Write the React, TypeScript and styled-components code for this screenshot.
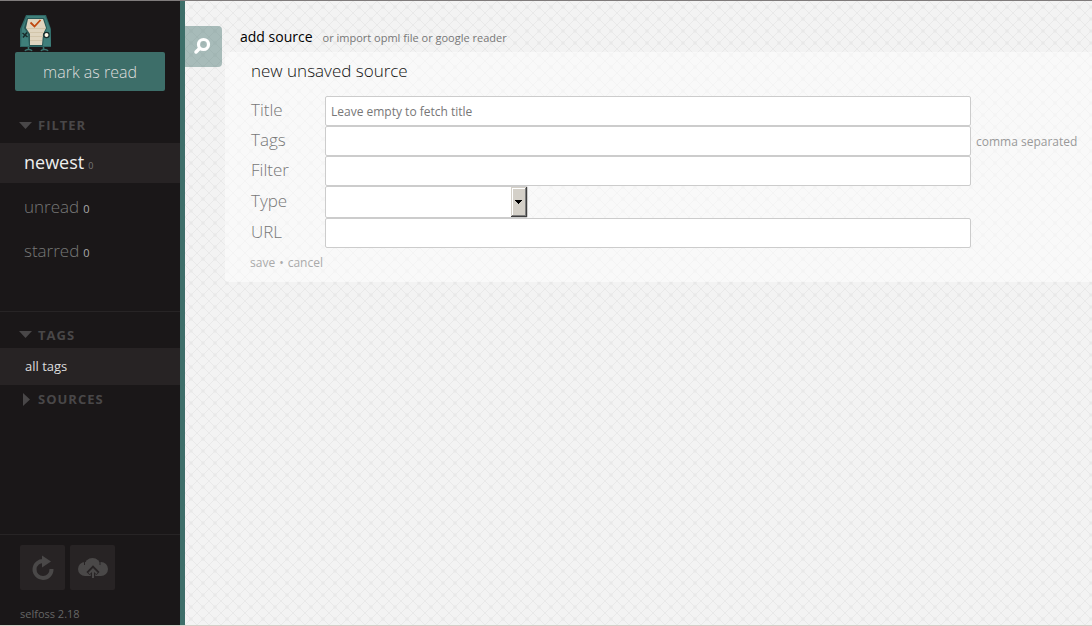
import React from 'react';
import styled, { createGlobalStyle } from 'styled-components';

const diagonals = Array.from({ length: 12 }, (_, i) => `M${i} ${i}h1v1h-1zM${11 - i} ${i}h1v1h-1z`).join('');

const tile =
  `<svg xmlns='http://www.w3.org/2000/svg' width='12' height='12' shape-rendering='crispEdges'><path d='${diagonals}' fill='#e9e9e9'/><path d='M5 4h2v1h-2zM5 7h2v1h-2zM4 5h4v2h-4z' fill='#ededed'/><path d='M5 5h2v2h-2z' fill='#e8e8e8'/></svg>`;

const GlobalStyle = createGlobalStyle`
  * { box-sizing: border-box; }
  body { margin: 0; font-family: 'Open Sans', sans-serif; color: #333; }
  button, input, select { font-family: inherit; }
  button { border: 0; padding: 0; background: none; cursor: pointer; }
`;

const Page = styled.div`
  display: flex;
  min-height: 100vh;
  border-top: 1px solid #807c7c;
  border-bottom: 1px solid #d4d0c8;
`;

const Sidebar = styled.aside`
  display: flex;
  flex-direction: column;
  flex: none;
  width: 185px;
  background: #1a1718;
  border-right: 5px solid #3d6e69;
`;

const Logo = styled.svg`
  display: block;
  width: 32px;
  height: 38px;
  margin: 13px 0 0 20px;
`;

const MarkRead = styled.button`
  height: 39px;
  margin: 0 15px 20px;
  border-radius: 2px;
  background: #3d6e69;
  color: #ddd;
  font-size: 16px;
  font-weight: 300;
`;

const Heading = styled.button<{ $tall?: boolean }>`
  display: flex;
  align-items: center;
  gap: 6px;
  height: ${(p) => (p.$tall ? 28 : 27)}px;
  padding-left: 19px;
  color: #494748;
  font-size: 13px;
  font-weight: 700;
  letter-spacing: 1px;
  text-transform: uppercase;
`;

const Arrow = styled.svg`
  width: 13px;
  height: 13px;
  fill: #494748;
`;

const List = styled.ul`
  margin: 0;
  padding: 0;
  list-style: none;
`;

const FilterList = styled(List)`
  display: grid;
  gap: 4px;
  padding: 4px 0 40px;
  border-bottom: 1px solid #272425;
`;

const FilterItem = styled.button<{ $active?: boolean }>`
  display: flex;
  align-items: baseline;
  gap: 4px;
  width: 100%;
  height: 40px;
  padding: 0 24px;
  line-height: ${(p) => (p.$active ? 38 : 40)}px;
  background: ${(p) => (p.$active ? '#272324' : 'transparent')};
  color: ${(p) => (p.$active ? '#eee' : '#777')};
  font-size: ${(p) => (p.$active ? 18 : 17)}px;
  font-weight: ${(p) => (p.$active ? 400 : 300)};
`;

const Count = styled.span<{ $dim?: boolean }>`
  color: ${(p) => (p.$dim ? '#777' : '#aaa')};
  font-size: ${(p) => (p.$dim ? 9 : 11)}px;
  font-weight: 400;
`;

const TagItem = styled.button`
  display: block;
  width: 100%;
  height: 37px;
  padding: 0 25px 2px;
  background: #272324;
  color: #ddd;
  font-size: 13px;
  text-align: left;
`;

const TagSection = styled.section`
  display: flex;
  flex-direction: column;
  padding-top: 9px;
`;

const Footer = styled.footer`
  margin-top: auto;
  padding: 10px 20px 3px;
  border-top: 1px solid #272425;
`;

const Tools = styled.div`
  display: flex;
  gap: 5px;
  margin-bottom: 16px;
`;

const Tool = styled.button`
  width: 45px;
  height: 45px;
  border-radius: 2px;
  background: #272324;
  svg { display: block; }
`;

const Version = styled.p`
  margin: 0;
  color: #666;
  font-size: 11px;
  line-height: 16px;
`;

const Main = styled.main`
  display: flex;
  flex: 1;
  gap: 3px;
  min-width: 0;
  padding-top: 25px;
  background: #f3f3f3 url("data:image/svg+xml,${encodeURIComponent(tile)}");
`;

const Search = styled.button`
  flex: none;
  width: 37px;
  height: 41px;
  border-radius: 0 4px 4px 0;
  background: rgba(61, 110, 105, 0.42);
  svg { display: block; }
`;

const Content = styled.div`
  flex: 1;
  min-width: 0;
`;

const Actions = styled.div`
  display: flex;
  align-items: baseline;
  gap: 10px;
  height: 26px;
  padding-left: 15px;
  line-height: 22px;
`;

const ActionLink = styled.a<{ $main?: boolean }>`
  color: ${(p) => (p.$main ? '#000' : '#777')};
  font-size: ${(p) => (p.$main ? 14 : 11)}px;
  text-decoration: none;
`;

const Card = styled.form`
  padding: 8px 0 9px 26px;
  border-radius: 4px 0 0 4px;
  background: rgba(255, 255, 255, 0.5);
`;

const Title = styled.h2`
  margin: 0 0 14px;
  font-size: 17px;
  font-weight: 300;
  line-height: 22px;
  color: #111;
`;

const Row = styled.div<{ $tall?: boolean }>`
  display: flex;
  height: ${(p) => (p.$tall ? 32 : 30)}px;
  line-height: ${(p) => (p.$tall ? 30 : 28)}px;
`;

const Label = styled.label`
  flex: none;
  width: 74px;
  color: #777;
  font-size: 17px;
  font-weight: 300;
`;

const FieldArea = styled.div`
  display: grid;
  grid-template-columns: 1fr 121px;
  flex: 1;
  min-width: 0;
`;

const Field = styled.input`
  min-width: 0;
  padding: 0 5px;
  border: 1px solid #ccc;
  border-radius: 2px;
  background: #fff;
  color: #333;
  font-size: 12px;
  outline: 0;
  &::placeholder { color: #777; opacity: 1; }
`;

const Hint = styled.span`
  padding: 2px 0 0 5px;
  color: #999;
  font-size: 12px;
  line-height: 28px;
  white-space: nowrap;
`;

const SelectWrap = styled.div`
  position: relative;
  width: 203px;
`;

const Select = styled.select`
  appearance: none;
  display: block;
  width: 100%;
  height: 100%;
  padding: 0 20px 0 5px;
  border: 1px solid #ccc;
  border-radius: 2px;
  background: #fff;
  outline: 0;
`;

const SelectArrow = styled.svg`
  position: absolute;
  top: 1px;
  right: 1px;
  pointer-events: none;
`;

const Submit = styled.div`
  display: flex;
  gap: 4px;
  margin-left: -1px;
  padding-top: 5px;
  color: #aaa;
  font-size: 12px;
  line-height: 20px;
`;

const TextButton = styled.button`
  color: inherit;
  font-size: inherit;
  line-height: inherit;
`;

const Down = () => <Arrow viewBox="0 0 13 13"><path d="M0 3h13l-6.5 7z" /></Arrow>;
const Right = () => <Arrow viewBox="0 0 13 13"><path d="M4 0v13l7-6.5z" /></Arrow>;

function Mascot() {
  return (
    <Logo viewBox="0 0 32 38" role="img" aria-label="selfoss">
      <path d="M6 1h20l5 14v18H0V15z" fill="#2f6664" />
      <path d="M7 2h18l5 12 1 18H1l1-18z" fill="#3f7f7a" />
      <path d="M7 4h17l3 10-3 6-1 12H9L8 20l-4-6z" fill="#2a5856" />
      <path d="M8 5h15l3 9-3 6-1 11H10V20l-4-6z" fill="#e0d5bf" />
      <path d="M7 14.500h18M9 18.500h15M10 22.500h13M10 26.500h12" stroke="#d2c5aa" fill="none" />
      <path d="M10.500 8.500l4 4 6-6.500" fill="none" stroke="#c0480f" strokeWidth="1.800" />
      <path d="M2.500 19l5 4M3 23.500l4-5" stroke="#182b2b" strokeWidth="1.600" />
      <circle cx="26.500" cy="21" r="2.600" fill="#fff8e6" stroke="#182b2b" strokeWidth="1.200" />
      <path d="M8.500 33v2.500M23.500 33v2.500M5 37c1-2 6-2 7 0M21 37c1-2 6-2 7 0" stroke="#3b7470" strokeWidth="1.600" fill="none" />
    </Logo>
  );
}

const rows = [
  { id: 'title', label: 'Title', placeholder: 'Leave empty to fetch title' },
  { id: 'tags', label: 'Tags', hint: 'comma separated' },
  { id: 'filter', label: 'Filter' },
];

type FieldRowProps = { id: string; label: string; placeholder?: string; hint?: string };

function FieldRow({ id, label, placeholder, hint }: FieldRowProps) {
  return (
    <Row>
      <Label htmlFor={id}>{label}</Label>
      <FieldArea>
        <Field id={id} type="text" placeholder={placeholder} />
        {hint && <Hint>{hint}</Hint>}
      </FieldArea>
    </Row>
  );
}

export default function App() {
  return (
    <>
      <GlobalStyle />
      <Page>
        <Sidebar>
          <Mascot />
          <MarkRead type="button">mark as read</MarkRead>
          <Heading type="button" $tall><Down />Filter</Heading>
          <FilterList>
            <li><FilterItem type="button" $active>newest <Count $dim>0</Count></FilterItem></li>
            <li><FilterItem type="button">unread <Count>0</Count></FilterItem></li>
            <li><FilterItem type="button">starred <Count>0</Count></FilterItem></li>
          </FilterList>
          <TagSection>
            <Heading type="button"><Down />Tags</Heading>
            <List><li><TagItem type="button">all tags</TagItem></li></List>
            <Heading type="button" $tall><Right />Sources</Heading>
          </TagSection>
          <Footer>
            <Tools>
              <Tool type="button" aria-label="refresh">
                <svg width="45" height="45" viewBox="0 0 45 45">
                  <path d="M24 16A8.500 8.500 0 1 0 31.500 24" fill="none" stroke="#4a4848" strokeWidth="4" />
                  <path d="M22 10.500l9 6-9 6z" fill="#4a4848" />
                </svg>
              </Tool>
              <Tool type="button" aria-label="upload">
                <svg width="45" height="45" viewBox="0 0 45 45">
                  <g fill="#4a4848">
                    <circle cx="15" cy="24" r="7" />
                    <circle cx="31" cy="24" r="7" />
                    <circle cx="22.500" cy="21" r="8" />
                    <path d="M15 22h16v9H15z" />
                  </g>
                  <path d="M14.500 16v4M30 16v4" stroke="#272324" />
                  <path d="M23 34V24M18 28.500l5-5 5 5" fill="none" stroke="#272324" strokeWidth="4.500" />
                  <path d="M23 33v-9M19 28.500l4-4 4 4" fill="none" stroke="#4a4848" strokeWidth="2" />
                </svg>
              </Tool>
            </Tools>
            <Version>selfoss 2.18</Version>
          </Footer>
        </Sidebar>
        <Main>
          <Search type="button" aria-label="search">
            <svg width="37" height="41" viewBox="0 0 37 41">
              <circle cx="18.500" cy="18.500" r="5" fill="none" stroke="#fff" strokeWidth="3.200" />
              <path d="M14.500 22.500l-3.500 3.500" stroke="#fff" strokeWidth="3.500" strokeLinecap="round" />
            </svg>
          </Search>
          <Content>
            <Actions>
              <ActionLink href="#add" $main>add source</ActionLink>
              <ActionLink href="#opml">or import opml file or google reader</ActionLink>
            </Actions>
            <Card onSubmit={(e) => e.preventDefault()}>
              <Title>new unsaved source</Title>
              {rows.map((r) => <FieldRow key={r.id} {...r} />)}
              <Row $tall>
                <Label htmlFor="type">Type</Label>
                <SelectWrap>
                  <Select id="type"><option></option></Select>
                  <SelectArrow width="16" height="30" viewBox="0 0 16 30" shapeRendering="crispEdges">
                    <path d="M0 0h16v30H0z" fill="#404040" />
                    <path d="M0 0h15v29H0z" fill="#d4d0c8" />
                    <path d="M1 1h13v27H1z" fill="#fff" />
                    <path d="M2 2h12v26H2z" fill="#d4d0c8" />
                    <path d="M14 1h1v28H1v-1h13z" fill="#808080" />
                    <path d="M4 13h7v1h-1v1H9v1H8v1H7v-1H6v-1H5v-1H4z" fill="#000" />
                  </SelectArrow>
                </SelectWrap>
              </Row>
              <FieldRow id="url" label="URL" />
              <Submit>
                <TextButton type="submit">save</TextButton>
                <span>•</span>
                <TextButton type="button">cancel</TextButton>
              </Submit>
            </Card>
          </Content>
        </Main>
      </Page>
    </>
  );
}
